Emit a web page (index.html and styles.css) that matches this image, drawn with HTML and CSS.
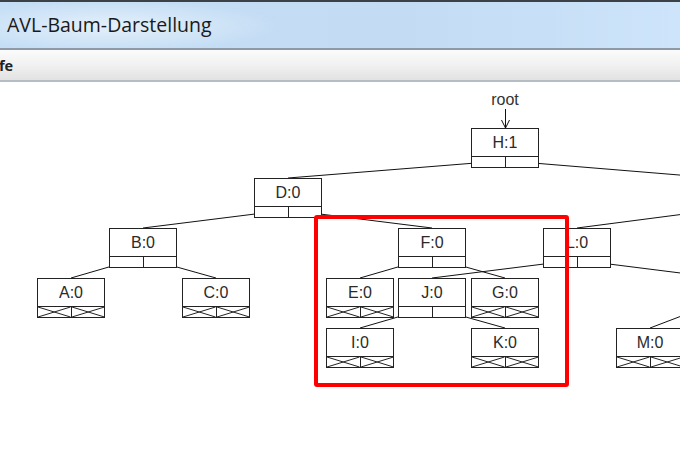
FILE: index.html
```html
<!DOCTYPE html>
<html lang="de">
<head>
<meta charset="utf-8">
<title>AVL-Baum-Darstellung</title>
<link rel="stylesheet" href="styles.css">
</head>
<body>
<div class="window">
  <header class="titlebar"><span class="title">AVL-Baum-Darstellung</span></header>
  <nav class="menubar"><span class="menu">fe</span></nav>
  <main class="canvas">
    <svg class="edges" viewBox="0 82 680 384" width="680" height="384">
      <g stroke="#111" stroke-width="1" fill="none">
        <line x1="488" y1="162" x2="288" y2="178"/>
        <line x1="521" y1="162" x2="740" y2="180"/>
        <line x1="271" y1="212" x2="143" y2="228"/>
        <line x1="304" y1="212" x2="432" y2="228"/>
        <line x1="126" y1="262" x2="71" y2="278"/>
        <line x1="159" y1="262" x2="216" y2="278"/>
        <line x1="415" y1="262" x2="360" y2="278"/>
        <line x1="448" y1="262" x2="505" y2="278"/>
        <line x1="560" y1="262" x2="432" y2="278"/>
        <line x1="593" y1="262" x2="740" y2="280.5"/>
        <line x1="700" y1="212" x2="577" y2="228"/>
        <line x1="415" y1="312" x2="360" y2="328"/>
        <line x1="448" y1="312" x2="505" y2="328"/>
        <line x1="692" y1="312" x2="650" y2="328"/>
        <line x1="505.5" y1="109" x2="505.5" y2="128"/>
        <polyline points="501.5,120 505.5,128 509.5,120"/>
      </g>
    </svg>
    <div class="root-label">root</div>

    <div class="node" style="left:471px;top:46px"><div class="key">H:1</div><div class="ptrs"><span class="cell"></span><span class="cell"></span></div></div>
    <div class="node" style="left:254px;top:96px"><div class="key">D:0</div><div class="ptrs"><span class="cell"></span><span class="cell"></span></div></div>
    <div class="node" style="left:109px;top:146px"><div class="key">B:0</div><div class="ptrs"><span class="cell"></span><span class="cell"></span></div></div>
    <div class="node" style="left:398px;top:146px"><div class="key">F:0</div><div class="ptrs"><span class="cell"></span><span class="cell"></span></div></div>
    <div class="node" style="left:543px;top:146px"><div class="key">L:0</div><div class="ptrs"><span class="cell"></span><span class="cell"></span></div></div>
    <div class="node" style="left:398px;top:196px"><div class="key">J:0</div><div class="ptrs"><span class="cell"></span><span class="cell"></span></div></div>

    <div class="node leaf" style="left:37px;top:196px"><div class="key">A:0</div><div class="ptrs"><span class="cell"><svg viewBox="0 0 10 10" preserveAspectRatio="none"><path d="M0 0L10 10M10 0L0 10"/></svg></span><span class="cell"><svg viewBox="0 0 10 10" preserveAspectRatio="none"><path d="M0 0L10 10M10 0L0 10"/></svg></span></div></div>
    <div class="node leaf" style="left:182px;top:196px"><div class="key">C:0</div><div class="ptrs"><span class="cell"><svg viewBox="0 0 10 10" preserveAspectRatio="none"><path d="M0 0L10 10M10 0L0 10"/></svg></span><span class="cell"><svg viewBox="0 0 10 10" preserveAspectRatio="none"><path d="M0 0L10 10M10 0L0 10"/></svg></span></div></div>
    <div class="node leaf" style="left:326px;top:196px"><div class="key">E:0</div><div class="ptrs"><span class="cell"><svg viewBox="0 0 10 10" preserveAspectRatio="none"><path d="M0 0L10 10M10 0L0 10"/></svg></span><span class="cell"><svg viewBox="0 0 10 10" preserveAspectRatio="none"><path d="M0 0L10 10M10 0L0 10"/></svg></span></div></div>
    <div class="node leaf" style="left:471px;top:196px"><div class="key">G:0</div><div class="ptrs"><span class="cell"><svg viewBox="0 0 10 10" preserveAspectRatio="none"><path d="M0 0L10 10M10 0L0 10"/></svg></span><span class="cell"><svg viewBox="0 0 10 10" preserveAspectRatio="none"><path d="M0 0L10 10M10 0L0 10"/></svg></span></div></div>
    <div class="node leaf" style="left:326px;top:246px"><div class="key">I:0</div><div class="ptrs"><span class="cell"><svg viewBox="0 0 10 10" preserveAspectRatio="none"><path d="M0 0L10 10M10 0L0 10"/></svg></span><span class="cell"><svg viewBox="0 0 10 10" preserveAspectRatio="none"><path d="M0 0L10 10M10 0L0 10"/></svg></span></div></div>
    <div class="node leaf" style="left:471px;top:246px"><div class="key">K:0</div><div class="ptrs"><span class="cell"><svg viewBox="0 0 10 10" preserveAspectRatio="none"><path d="M0 0L10 10M10 0L0 10"/></svg></span><span class="cell"><svg viewBox="0 0 10 10" preserveAspectRatio="none"><path d="M0 0L10 10M10 0L0 10"/></svg></span></div></div>
    <div class="node leaf" style="left:616px;top:246px"><div class="key">M:0</div><div class="ptrs"><span class="cell"><svg viewBox="0 0 10 10" preserveAspectRatio="none"><path d="M0 0L10 10M10 0L0 10"/></svg></span><span class="cell"><svg viewBox="0 0 10 10" preserveAspectRatio="none"><path d="M0 0L10 10M10 0L0 10"/></svg></span></div></div>

    <div class="highlight"></div>
  </main>
</div>
</body>
</html>
```
FILE: styles.css
```css
html, body {
  margin: 0;
  padding: 0;
  background: #ffffff;
}
.window {
  width: 680px;
  height: 466px;
  overflow: hidden;
  display: flex;
  flex-direction: column;
  font-family: "Liberation Sans", Arial, sans-serif;
}
.titlebar {
  height: 46px;
  border-top: 2px solid #3c4148;
  background:
    radial-gradient(ellipse 170px 26px at 110px 24px, rgba(255,255,255,0.55), rgba(255,255,255,0) 100%),
    linear-gradient(90deg, #c4def5 0%, #c3dcf4 60%, #cde4fa 100%);
  display: flex;
  align-items: center;
  flex-shrink: 0;
}
.title {
  font-family: "Open Sans", "Noto Sans", sans-serif;
  font-size: 19.5px;
  color: #1a1a1a;
  padding-left: 7px;
  margin-top: -1px;
}
.menubar {
  height: 30px;
  border-top: 2px solid #8e9aa6;
  border-bottom: 2px solid #b4bcc4;
  background: linear-gradient(180deg, #fbfbfb 0%, #f1f1f1 50%, #e2e2e2 100%);
  display: flex;
  align-items: center;
  flex-shrink: 0;
}
.menu {
  font-family: "Open Sans", "Noto Sans", sans-serif;
  font-weight: 700;
  font-size: 14.5px;
  color: #222;
  margin-left: -1px;
}
.canvas {
  position: relative;
  flex: 1;
  background: #ffffff;
  overflow: hidden;
}
.edges {
  position: absolute;
  left: 0;
  top: 0;
}
.root-label {
  position: absolute;
  left: 485px;
  top: 9px;
  width: 40px;
  text-align: center;
  font-size: 16px;
  line-height: 18px;
  color: #333;
}
.node {
  position: absolute;
  width: 66px;
  height: 38px;
  border: 1px solid #222;
  background: #fff;
  display: flex;
  flex-direction: column;
}
.key {
  height: 27px;
  line-height: 28px;
  text-align: center;
  font-size: 16px;
  color: #2a2a2a;
  border-bottom: 1px solid #222;
}
.ptrs {
  flex: 1;
  display: flex;
}
.cell {
  flex: 1;
  display: block;
  position: relative;
}
.cell + .cell {
  border-left: 1px solid #222;
}
.cell svg {
  position: absolute;
  inset: 0;
  width: 100%;
  height: 100%;
}
.cell svg path {
  stroke: #222;
  stroke-width: 1;
  fill: none;
  vector-effect: non-scaling-stroke;
}
.highlight {
  position: absolute;
  left: 314px;
  top: 133px;
  width: 247px;
  height: 164px;
  border: 4.5px solid #ff0000;
  border-radius: 3px;
}
```
